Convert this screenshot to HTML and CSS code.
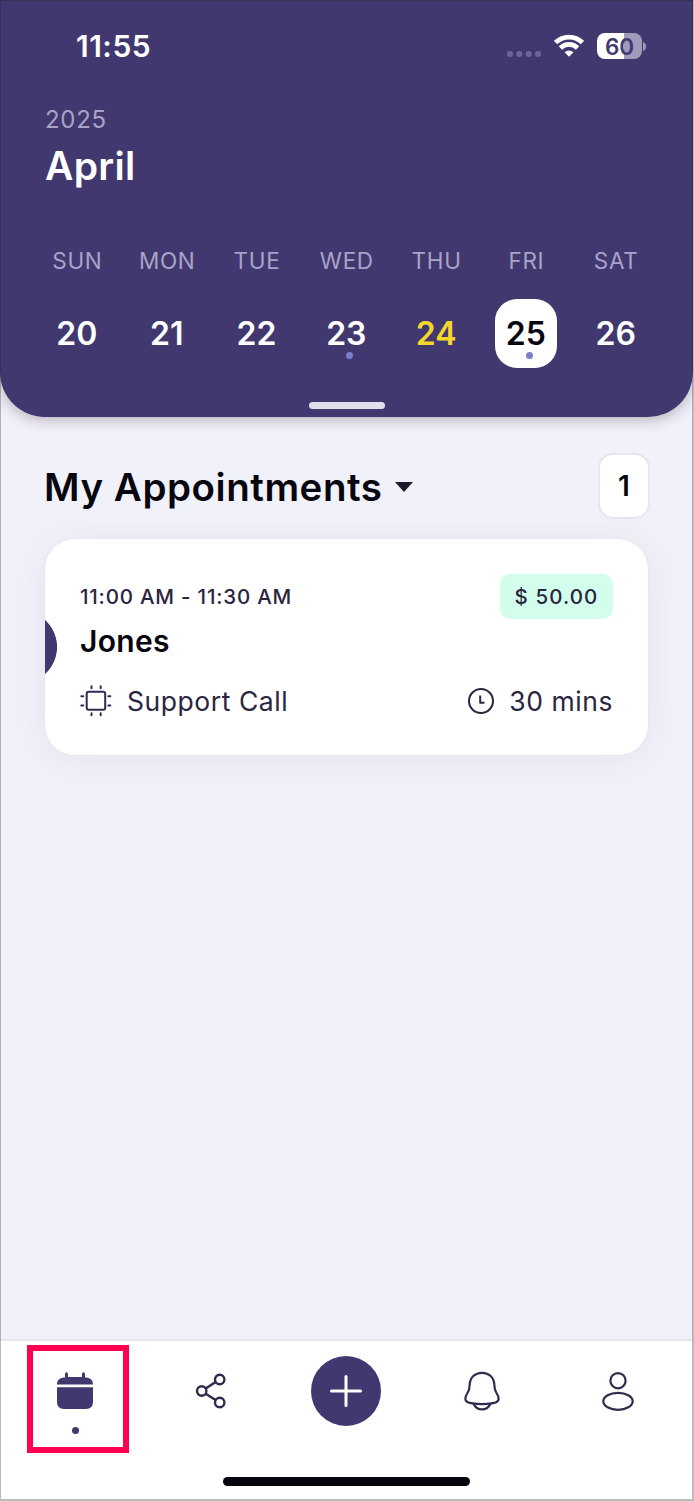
FILE: index.html
```html
<!DOCTYPE html>
<html lang="en">
<head>
<meta charset="utf-8">
<title>Appointments</title>
<link rel="stylesheet" href="styles.css">
</head>
<body>
<div class="screen">
  <header class="header">
    <div class="status">
      <span class="clock">11:55</span>
      <svg class="signal" width="36" height="8" viewBox="0 0 36 8"><g fill="#6d6696"><rect x="1" y="1" width="6" height="6" rx="2.4"/><rect x="10.3" y="1" width="6" height="6" rx="2.4"/><rect x="19.7" y="1" width="6" height="6" rx="2.4"/><rect x="29" y="1" width="6" height="6" rx="2.4"/></g></svg>
      <svg class="wifi" width="30" height="23" viewBox="0 0 30 23"><g fill="none" stroke="#fff" stroke-width="4.800"><path d="M1.600 8.600a19 19 0 0 1 26.800 0"/><path d="M6.400 14a12.200 12.200 0 0 1 17.200 0"/></g><path d="M10.600 18.200a6.300 6.300 0 0 1 8.800 0L15 22.700z" fill="#fff"/></svg>
      <div class="battery"><span class="level">60</span><svg class="cap" width="3" height="9" viewBox="0 0 3 9"><path d="M0 0Q3 1.400 3 4.500Q3 7.600 0 9z" fill="#a09bbb"/></svg></div>
    </div>
    <div class="year">2025</div>
    <h1 class="month">April</h1>
    <div class="week">
      <div class="day"><span class="name">SUN</span><span class="date">20</span></div>
      <div class="day"><span class="name">MON</span><span class="date">21</span></div>
      <div class="day"><span class="name">TUE</span><span class="date">22</span></div>
      <div class="day"><span class="name">WED</span><span class="date marked">23</span></div>
      <div class="day"><span class="name">THU</span><span class="date today">24</span></div>
      <div class="day"><span class="name">FRI</span><span class="date selected marked">25</span></div>
      <div class="day"><span class="name">SAT</span><span class="date">26</span></div>
    </div>
    <div class="handle"></div>
  </header>
  <main class="content">
    <div class="title-row">
      <h2 class="title">My Appointments</h2>
      <svg class="caret" width="18" height="10" viewBox="0 0 18 10"><path d="M0 0H18L9 10z" fill="#1b1a2b"/></svg>
      <span class="count">1</span>
    </div>
    <article class="card">
      <div class="card-line top"><span class="time">11:00 AM - 11:30 AM</span><span class="price">$ 50.00</span></div>
      <div class="client">Jones</div>
      <div class="card-line bottom">
        <svg width="32" height="32" viewBox="0 0 32 32" fill="none" stroke="#312a50" stroke-width="2" stroke-linecap="round"><rect x="6.700" y="6.700" width="18.500" height="18" rx="2"/><path d="M11.500 1.300v2M20.700 1.300v2M11.500 28.300v2M20.700 28.300v2M1.300 11.200h2M1.300 20.500h2M28.300 11.200h2M28.300 20.500h2"/></svg>
        <span class="service">Support Call</span>
        <svg class="watch" width="28" height="28" viewBox="0 0 28 28" fill="none" stroke="#2a2540" stroke-width="2"><circle cx="14" cy="14" r="12"/><path d="M13.200 8.500v7.300h4.300" stroke-linejoin="round"/></svg>
        <span class="duration">30 mins</span>
      </div>
    </article>
  </main>
  <nav class="tabs">
    <div class="tab active">
      <svg width="36" height="38" viewBox="0 0 36 38"><path d="M0 12.500C0 8 3 5.500 8 5.500V1.700a1 1 0 0 1 3 0v3.400h14V1.700a1 1 0 0 1 3 0v3.800c5 0 8 2.500 8 7z" fill="#41386f"/><path d="M0 15.200H36V30q0 7-7 7H7q-7 0-7-7z" fill="#41386f"/></svg>
      <i class="dot"></i>
    </div>
    <div class="tab"><svg width="32" height="36" viewBox="0 0 32 36" fill="none" stroke="#312b4b" stroke-width="2.400"><circle cx="6.700" cy="18" r="4.700"/><circle cx="24.700" cy="6.500" r="4.700"/><circle cx="24.700" cy="29.500" r="4.700"/><path d="M10.700 15.500L20.600 9M10.700 20.700L20.600 27"/></svg></div>
    <div class="tab"><span class="add"><svg width="32" height="32" viewBox="0 0 32 32"><path d="M16 1.500v29M1.500 16h29" stroke="#fff" stroke-width="3" stroke-linecap="round"/></svg></span></div>
    <div class="tab"><svg width="36" height="40" viewBox="0 0 36 40" fill="none" stroke="#312b4b" stroke-width="2.200"><path d="M18 1.800C11 1.800 6 6.500 5.700 13.500C5.600 18 5.200 19.500 3.500 22C1.500 25 .8 27 1.700 29.300C2.600 31.300 4.500 31.800 7 32.200Q18 34 29 32.200C31.500 31.800 33.400 31.300 34.300 29.300C35.200 27 34.500 25 32.500 22C30.800 19.500 30.400 18 30.300 13.500C30 6.500 25 1.800 18 1.800z"/><path d="M9.500 32.700C13 40.300 23 40.300 26.500 32.700"/></svg></div>
    <div class="tab"><svg width="34" height="40" viewBox="0 0 34 40" fill="none" stroke="#312b4b" stroke-width="2.200"><circle cx="17" cy="9.700" r="7.600"/><ellipse cx="17" cy="30.300" rx="14.700" ry="8.500"/></svg></div>
    <div class="home"></div>
  </nav>
  <div class="edge"></div>
</div>
</body>
</html>
```
FILE: styles.css
```css
* { box-sizing: border-box; }
body { margin: 0; background: #bdbdc1; font-family: Inter, "Liberation Sans", sans-serif; }
.screen { position: relative; width: 693px; height: 1500px; display: flex; flex-direction: column; background: #f1f1fa; overflow: hidden; }
.edge { position: absolute; inset: 0; border: 1px solid rgba(30, 30, 30, .3); pointer-events: none; }
.header { height: 417px; flex: none; background: #41386f; border-radius: 0 0 45px 45px; box-shadow: 0 3px 14px rgba(60, 30, 50, .3); display: flex; flex-direction: column; }
.status { display: flex; height: 60px; padding: 33px 47px 0 76px; color: #fff; align-items: flex-start; flex: none; }
.clock { margin-top: -1px; font-size: 30px; line-height: 28px; font-weight: 600; letter-spacing: .5px; width: 80px; flex: none; }
.signal { margin: 17px 0 0 auto; }
.wifi { margin: 1px 13px 0 12px; }
.battery { display: flex; align-items: center; gap: 1px; }
.level { width: 45px; height: 26px; border-radius: 8px; background: linear-gradient(90deg, #fff 60%, #a09bbb 60%); color: #41386f; font-size: 22.500px; line-height: 27px; font-weight: 600; text-align: center; }
.year { margin: 46px 0 0 45px; font-size: 24px; line-height: 28px; letter-spacing: .7px; color: #a9a3c9; }
.month { margin: 12px 0 0 45px; font-size: 39px; line-height: 40px; font-weight: 600; letter-spacing: .3px; color: #fff; }
.week { display: grid; grid-template-columns: repeat(7, 89.8px); margin: 61px 0 0 32px; }
.day { display: flex; flex-direction: column; align-items: center; }
.name { padding-left: 1px; font-size: 22.500px; line-height: 28px; letter-spacing: .7px; color: #a9a3c9; }
.date { position: relative; margin-top: 24px; width: 62px; height: 69px; line-height: 69px; font-size: 32px; font-weight: 600; text-align: center; color: #fff; }
.today { color: #f5d72b; }
.selected { background: #fff; color: #08070f; border-radius: 22px; }
.marked::after { content: ""; position: absolute; left: 31px; top: 53px; width: 7px; height: 7px; border-radius: 50%; background: #7780c8; }
.handle { width: 76px; height: 7px; margin: 34px auto 0; border-radius: 4px; background: #e0dfeb; }
.content { flex: 1; padding: 36px 44px 0; }
.title-row { display: flex; align-items: center; height: 66px; }
.title { margin: 2px 0 0; font-size: 38.500px; line-height: 48px; font-weight: 600; letter-spacing: .55px; color: #08070f; white-space: nowrap; }
.caret { margin: 2px 0 0 12px; }
.count { margin: 0 -1px 0 auto; width: 52px; height: 66px; border: 2px solid #e6e5f0; border-radius: 15px; background: #fff; font-size: 28px; line-height: 62px; font-weight: 600; text-align: center; color: #08070f; }
.card { position: relative; margin-top: 19px; height: 218px; padding: 35px 35px 0; border: 1px solid #e6e5f0; border-radius: 31px; background: radial-gradient(circle at -24.400px 108px, #41386f 36px, #fff 36.800px); box-shadow: 0 4px 40px rgba(50, 50, 90, .07); }
.card-line { display: flex; align-items: center; color: #2a2540; white-space: nowrap; }
.top { justify-content: space-between; height: 45px; }
.time, .price { font-size: 20.500px; font-weight: 500; letter-spacing: .8px; }
.price { width: 113px; line-height: 45px; border-radius: 10px; background: #d3feeb; letter-spacing: 1.100px; text-align: center; }
.client { margin-top: 3px; font-size: 30px; line-height: 38px; font-weight: 600; letter-spacing: .3px; color: #08070f; }
.bottom { margin-top: 25px; height: 32px; font-size: 26.500px; letter-spacing: .55px; }
.service { margin-left: 15px; }
.watch { margin-left: auto; }
.duration { margin-left: 14px; }
.tabs { position: relative; flex: none; height: 161px; border-top: 2px solid #e6e5ee; background: #fff; display: grid; grid-template-columns: repeat(5, 135.700px); padding-left: 7px; }
.tab { height: 100px; display: flex; justify-content: center; align-items: center; }
.active { flex-direction: column; justify-content: flex-start; width: 102px; height: 108px; margin: 4px 0 0 20px; padding: 21px 6px 0 0; border: 6px solid #ff0050; }
.dot { width: 7px; height: 7px; margin-top: 17px; border-radius: 50%; background: #41386f; }
.add { width: 70px; height: 70px; border-radius: 50%; background: #41386f; display: flex; align-items: center; justify-content: center; }
.home { position: absolute; left: 223px; bottom: 14px; width: 247px; height: 9px; border-radius: 5px; background: #05040c; }
```
